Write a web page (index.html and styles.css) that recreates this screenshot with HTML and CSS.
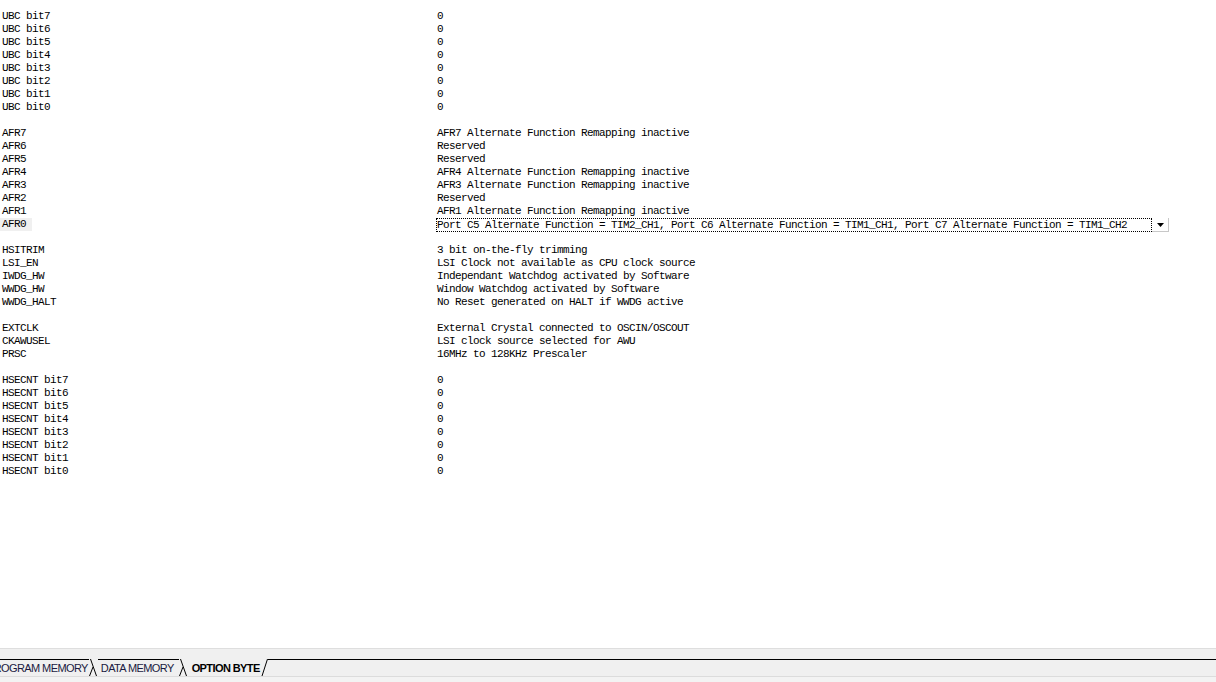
FILE: index.html
```html
<!DOCTYPE html>
<html>
<head>
<meta charset="utf-8">
<link rel="stylesheet" href="styles.css">
</head>
<body>
<div class="page">
  <div class="grid">
    <div class="row"><span class="k">UBC bit7</span><span class="v">0</span></div>
    <div class="row"><span class="k">UBC bit6</span><span class="v">0</span></div>
    <div class="row"><span class="k">UBC bit5</span><span class="v">0</span></div>
    <div class="row"><span class="k">UBC bit4</span><span class="v">0</span></div>
    <div class="row"><span class="k">UBC bit3</span><span class="v">0</span></div>
    <div class="row"><span class="k">UBC bit2</span><span class="v">0</span></div>
    <div class="row"><span class="k">UBC bit1</span><span class="v">0</span></div>
    <div class="row"><span class="k">UBC bit0</span><span class="v">0</span></div>
    <div class="row blank"></div>
    <div class="row"><span class="k">AFR7</span><span class="v">AFR7 Alternate Function Remapping inactive</span></div>
    <div class="row"><span class="k">AFR6</span><span class="v">Reserved</span></div>
    <div class="row"><span class="k">AFR5</span><span class="v">Reserved</span></div>
    <div class="row"><span class="k">AFR4</span><span class="v">AFR4 Alternate Function Remapping inactive</span></div>
    <div class="row"><span class="k">AFR3</span><span class="v">AFR3 Alternate Function Remapping inactive</span></div>
    <div class="row"><span class="k">AFR2</span><span class="v">Reserved</span></div>
    <div class="row"><span class="k">AFR1</span><span class="v">AFR1 Alternate Function Remapping inactive</span></div>
    <div class="row"><span class="k"><span class="sel">AFR0</span></span><span class="v"><span class="combo"><span class="combo-text">Port C5 Alternate Function = TIM2_CH1, Port C6 Alternate Function = TIM1_CH1, Port C7 Alternate Function = TIM1_CH2</span><span class="combo-btn"><svg width="7" height="4" viewBox="0 0 7 4"><path d="M0 0H7L3.5 4Z" fill="#000"/></svg></span></span></span></div>
    <div class="row blank"></div>
    <div class="row"><span class="k">HSITRIM</span><span class="v">3 bit on-the-fly trimming</span></div>
    <div class="row"><span class="k">LSI_EN</span><span class="v">LSI Clock not available as CPU clock source</span></div>
    <div class="row"><span class="k">IWDG_HW</span><span class="v">Independant Watchdog activated by Software</span></div>
    <div class="row"><span class="k">WWDG_HW</span><span class="v">Window Watchdog activated by Software</span></div>
    <div class="row"><span class="k">WWDG_HALT</span><span class="v">No Reset generated on HALT if WWDG active</span></div>
    <div class="row blank"></div>
    <div class="row"><span class="k">EXTCLK</span><span class="v">External Crystal connected to OSCIN/OSCOUT</span></div>
    <div class="row"><span class="k">CKAWUSEL</span><span class="v">LSI clock source selected for AWU</span></div>
    <div class="row"><span class="k">PRSC</span><span class="v">16MHz to 128KHz Prescaler</span></div>
    <div class="row blank"></div>
    <div class="row"><span class="k">HSECNT bit7</span><span class="v">0</span></div>
    <div class="row"><span class="k">HSECNT bit6</span><span class="v">0</span></div>
    <div class="row"><span class="k">HSECNT bit5</span><span class="v">0</span></div>
    <div class="row"><span class="k">HSECNT bit4</span><span class="v">0</span></div>
    <div class="row"><span class="k">HSECNT bit3</span><span class="v">0</span></div>
    <div class="row"><span class="k">HSECNT bit2</span><span class="v">0</span></div>
    <div class="row"><span class="k">HSECNT bit1</span><span class="v">0</span></div>
    <div class="row"><span class="k">HSECNT bit0</span><span class="v">0</span></div>
  </div>
  <div class="footer">
    <div class="band"></div>
    <div class="tabs">
      <span class="tab first">PROGRAM MEMORY</span>
      <svg class="sep" width="9" height="17" viewBox="0 0 9 17"><path d="M1.5 0L7.5 17M0.5 17L4 8" stroke="#000" stroke-width="1" fill="none"/></svg>
      <span class="tab second">DATA MEMORY</span>
      <svg class="sep" width="9" height="17" viewBox="0 0 9 17"><path d="M1.5 0L7.5 17M0.5 17L4 8" stroke="#000" stroke-width="1" fill="none"/></svg>
      <span class="tab active">OPTION BYTE</span>
      <svg class="sep last" width="7" height="17" viewBox="0 0 7 17"><path d="M6.5 0L1 17" stroke="#000" stroke-width="1" fill="none"/></svg>
      <span class="rest"></span>
    </div>
    <div class="bottom"></div>
  </div>
</div>
</body>
</html>
```
FILE: styles.css
```css
html, body {
  margin: 0;
  padding: 0;
  background: #fff;
}
.page {
  width: 1216px;
  height: 682px;
  display: flex;
  flex-direction: column;
  overflow: hidden;
}
.grid {
  flex: 1;
  padding-top: 10px;
  font-family: "Liberation Mono", monospace;
  font-size: 11px;
  letter-spacing: -0.6px;
  color: #000;
}
.row {
  display: grid;
  grid-template-columns: 437px 1fr;
  height: 13px;
  line-height: 13px;
  white-space: pre;
}
.k {
  padding-left: 2px;
}
.sel {
  display: inline-block;
  margin-left: -2px;
  padding-left: 2px;
  width: 30px;
  height: 13px;
  background: #f0f0f0;
}
.combo {
  display: inline-flex;
  margin-left: -1px;
  height: 14px;
  vertical-align: top;
}
.combo-text {
  box-sizing: border-box;
  width: 716px;
  height: 14px;
  border: 1px dotted #000;
  line-height: 12px;
  overflow: hidden;
}
.combo-btn {
  box-sizing: border-box;
  width: 17px;
  height: 14px;
  display: flex;
  align-items: center;
  justify-content: center;
  border-right: 1px solid #c8c8c8;
  border-bottom: 1px solid #c8c8c8;
  background: #fff;
}
.footer {
  height: 33px;
  background: #f0f0f0;
  border-top: 1px solid #dedede;
  display: flex;
  flex-direction: column;
}
.band {
  height: 10px;
}
.tabs {
  height: 17px;
  display: flex;
  align-items: flex-start;
  font-family: "Liberation Sans", Arial, sans-serif;
  font-size: 11px;
  letter-spacing: -0.6px;
  color: #1a1a40;
  border-bottom: 1px solid #dcdcdc;
  background: #f0f0f0;
}
.tab {
  height: 16px;
  line-height: 16px;
  margin-top: 1px;
  white-space: nowrap;
  box-shadow: 0 -1px 0 #000;
}
.tab.first {
  margin-left: -13px;
  padding-right: 1px;
}
.tab.second {
  padding: 0 5px 0 3px;
}
.tab.active {
  font-weight: bold;
  color: #000;
  box-shadow: none;
  padding: 0 1px 0 4px;
}
.sep {
  display: block;
  flex: none;
}
.rest {
  flex: 1;
  height: 17px;
  border-top: 1px solid #000;
  box-sizing: border-box;
}
.bottom {
  flex: 1;
  background: #f3f3f3;
}
```
